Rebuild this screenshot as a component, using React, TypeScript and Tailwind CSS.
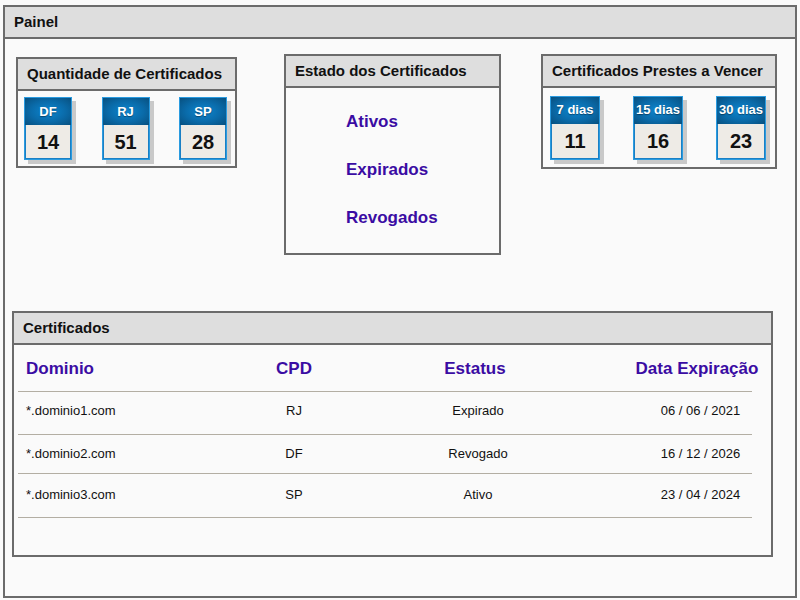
const font = { fontFamily: '"Liberation Sans", Arial, sans-serif' };

type Tile = { label: string; value: number };

const porCpd: Tile[] = [
  { label: "DF", value: 14 },
  { label: "RJ", value: 51 },
  { label: "SP", value: 28 },
];

const aVencer: Tile[] = [
  { label: "7 dias", value: 11 },
  { label: "15 dias", value: 16 },
  { label: "30 dias", value: 23 },
];

const certificados = [
  { dominio: "*.dominio1.com", cpd: "RJ", estatus: "Expirado", data: "06 / 06 / 2021", h: "h-[42px] pb-[4px]" },
  { dominio: "*.dominio2.com", cpd: "DF", estatus: "Revogado", data: "16 / 12 / 2026", h: "h-[38px]" },
  { dominio: "*.dominio3.com", cpd: "SP", estatus: "Ativo", data: "23 / 04 / 2024", h: "h-[43px] pb-[2px]" },
];

function Header({ title }: { title: string }) {
  return (
    <div className="flex h-[32px] shrink-0 items-center border-b-2 border-[#6b6b6b] bg-[#dedede] pl-[9px] text-[15px] font-bold text-[#111]">
      {title}
    </div>
  );
}

function CountTile({ label, value, width }: Tile & { width: string }) {
  return (
    <div className={`flex flex-col border border-[#2a9be0] bg-[#1a7fc4] shadow-[4px_4px_0_#c9c9c9] ${width}`}>
      <div className="flex h-[27px] items-center justify-center bg-[radial-gradient(ellipse_at_center,#0c86d0_0%,#0a6aa8_55%,#08507f_100%)] text-[13px] font-bold text-white [text-shadow:0_1px_1px_rgba(0,0,0,0.4)]">
        {label}
      </div>
      <div className="mx-[1px] mb-[1px] flex flex-1 items-center justify-center bg-[#eeebe6] text-[20px] font-bold text-[#111]">
        {value}
      </div>
    </div>
  );
}

function Card({ title, className = "", children }: { title: string; className?: string; children: React.ReactNode }) {
  return (
    <div className={`flex flex-col border-2 border-[#6b6b6b] bg-[#fafafa] ${className}`}>
      <Header title={title} />
      {children}
    </div>
  );
}

export default function App() {
  return (
    <div style={font} className="h-[600px] w-[800px] bg-[#fafafa] pl-[3px] pt-[5px]">
      <div className="flex h-[593px] w-[794px] flex-col border-2 border-[#6b6b6b] bg-[#fafafa]">
        <Header title="Painel" />

        <div className="flex items-start pl-[11px] pt-[15px]">
          <Card title="Quantidade de Certificados" className="mt-[3px] w-[221px]">
            <div className="flex h-[75px] items-center justify-between pl-[6px] pr-[8px]">
              {porCpd.map((t) => (
                <CountTile key={t.label} {...t} width="h-[63px] w-[48px]" />
              ))}
            </div>
          </Card>

          <Card title="Estado dos Certificados" className="ml-[47px] w-[217px]">
            <div className="flex h-[165px] flex-col gap-[28px] pl-[60px] pt-[24px] text-[17px] font-bold text-[#3a0ca3]">
              <span className="h-[20px] leading-[20px]">Ativos</span>
              <span className="h-[20px] leading-[20px]">Expirados</span>
              <span className="h-[20px] leading-[20px]">Revogados</span>
            </div>
          </Card>

          <Card title="Certificados Prestes a Vencer" className="ml-[40px] w-[236px]">
            <div className="flex h-[79px] items-center justify-between pl-[7px] pr-[9px]">
              {aVencer.map((t) => (
                <CountTile key={t.label} {...t} width="h-[64px] w-[50px]" />
              ))}
            </div>
          </Card>
        </div>

        <Card title="Certificados" className="ml-[7px] mt-[56px] w-[761px]">
          <div className="flex h-[210px] flex-col">
            <div className="flex h-[46px] items-center pt-[1px] text-[17px] font-bold text-[#3a0ca3]">
              <div className="w-[250px] pl-3">Dominio</div>
              <div className="w-[60px] text-center">CPD</div>
              <div className="w-[302px] text-center">Estatus</div>
              <div className="w-[142px] whitespace-nowrap text-center">Data Expiração</div>
            </div>
            <div className="ml-[4px] mr-[19px] h-px bg-[#b3aea3]" />
            {certificados.map((c) => (
              <div key={c.dominio}>
                <div className={`flex items-center text-[13px] text-[#111] ${c.h}`}>
                  <div className="w-[250px] pl-3">{c.dominio}</div>
                  <div className="w-[60px] text-center">{c.cpd}</div>
                  <div className="w-[302px] pl-[6px] text-center">{c.estatus}</div>
                  <div className="w-[145px] pl-[4px] text-center">{c.data}</div>
                </div>
                <div className="ml-[4px] mr-[19px] h-px bg-[#b3aea3]" />
              </div>
            ))}
          </div>
        </Card>
      </div>
    </div>
  );
}
